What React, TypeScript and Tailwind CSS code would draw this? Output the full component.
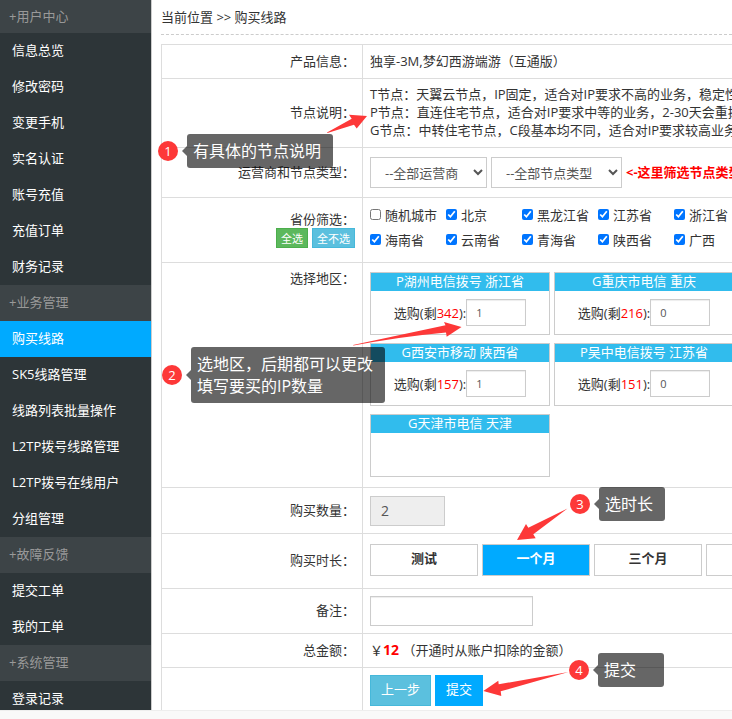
import type { ReactNode } from "react";

const menu = [
  { title: "用户中心", items: ["信息总览", "修改密码", "变更手机", "实名认证", "账号充值", "充值订单", "财务记录"] },
  { title: "业务管理", items: ["购买线路", "SK5线路管理", "线路列表批量操作", "L2TP拨号线路管理", "L2TP拨号在线用户", "分组管理"] },
  { title: "故障反馈", items: ["提交工单", "我的工单"] },
  { title: "系统管理", items: ["登录记录"] },
];

const activeItem = "购买线路";

const provinces = [
  { name: "随机城市", checked: false },
  { name: "北京", checked: true },
  { name: "黑龙江省", checked: true },
  { name: "江苏省", checked: true },
  { name: "浙江省", checked: true },
  { name: "海南省", checked: true },
  { name: "云南省", checked: true },
  { name: "青海省", checked: true },
  { name: "陕西省", checked: true },
  { name: "广西", checked: true },
];

const areas = [
  { name: "P湖州电信拨号 浙江省", left: 342, count: 1 },
  { name: "G重庆市电信 重庆", left: 216, count: 0 },
  { name: "G西安市移动 陕西省", left: 157, count: 1 },
  { name: "P吴中电信拨号 江苏省", left: 151, count: 0 },
  { name: "G天津市电信 天津" },
];

const durations = ["测试", "一个月", "三个月", "六个月"];

const Sidebar = () => (
  <nav className="w-[152px] shrink-0 overflow-hidden border-r border-[#ccc] bg-[#2d3538]">
    {menu.map((group, gi) => (
      <div key={group.title}>
        <h2 className={`flex items-center bg-[#3d4447] pb-0.5 pl-[9px] text-[#999] ${gi === 0 ? "h-[33px]" : "h-9"}`}>
          +{group.title}
        </h2>
        <ul>
          {group.items.map((item) => (
            <li key={item}>
              <a
                href="#"
                className={`flex h-9 items-center pb-0.5 pl-3 text-white ${item === activeItem ? "bg-[#00aaff]" : ""}`}
              >
                {item}
              </a>
            </li>
          ))}
        </ul>
      </div>
    ))}
  </nav>
);

type RowProps = { label?: ReactNode; height: string; top?: boolean; children: ReactNode };

const Row = ({ label, height, top, children }: RowProps) => (
  <tr className={height}>
    <th
      scope="row"
      className={`w-[201px] border border-[#ddd] pr-[7px] pl-2 text-right font-normal ${top ? "pt-1.5 align-top" : "pb-0.5 align-middle"}`}
    >
      {label}
    </th>
    <td className={`border border-[#ddd] px-[7px] ${top ? "pt-[9px] align-top" : "pb-0.5 align-middle"}`}>{children}</td>
  </tr>
);

const AreaCard = ({ area }: { area: (typeof areas)[number] }) => (
  <div className="h-[63px] w-[180px] border border-[#ccc]">
    <div className="h-[18px] bg-[#31bced] text-center leading-4 text-white">{area.name}</div>
    {area.left !== undefined && (
      <label className="flex h-[43px] items-center justify-center">
        <span>
          选购(剩<span className="text-[#f00]">{area.left}</span>):
        </span>
        <input
          type="text"
          defaultValue={area.count}
          className="h-[27px] w-[60px] border border-[#ccc] px-[9px] text-[11px] text-[#555] shadow-[inset_0_1px_1px_rgba(0,0,0,0.075)]"
        />
      </label>
    )}
  </div>
);

type MarkerProps = { step: number; place: string; width: string; children: ReactNode };

const Marker = ({ step, place, width, children }: MarkerProps) => (
  <div className={`pointer-events-none absolute flex items-center text-white ${place}`}>
    <span className="flex h-5 w-5 items-center justify-center rounded-full bg-[#fd3838] text-[13px]">{step}</span>
    <span className="ml-1 h-0 w-0 border-y-[5px] border-r-[5px] border-y-transparent border-r-black/60" />
    <span className={`rounded-[3px] bg-black/60 px-1.5 py-1.5 text-base leading-[22px] whitespace-pre ${width}`}>
      {children}
    </span>
  </div>
);

const Arrows = () => (
  <svg className="pointer-events-none absolute top-0 left-0" width="732" height="719" fill="#fd3838" aria-hidden="true">
    <path d="M327 132.5 L351.7 118.7 L349 114.7 L367 116 L356.7 128.5 L354 124.7 L327.5 133Z" />
    <path d="M353 345 L445.5 325.3 L444 322 L461.5 327 L446.7 336.7 L446 332.5 Q398 337 353.5 345.6Z" />
    <path d="M567.5 508.5 L528.3 527.7 L526 524 L517 540 L535.7 538.3 L533.3 534.3Z" />
    <path d="M568.5 672 L498.7 684.3 L498.3 680.7 L483.3 691 L501.3 696 L500.7 691.3Z" />
  </svg>
);

const selectClass = "h-[31px] border border-[#ccc] bg-white px-[10px] text-[#555]";

const OrderForm = () => (
  <table className="w-full min-w-[760px] table-fixed border-collapse">
    <tbody>
      <Row label="产品信息：" height="h-[34px]">独享-3M,梦幻西游端游（互通版）</Row>
      <Row label="节点说明：" height="h-[69px]">
        <div className="whitespace-nowrap">
          <p>T节点：天翼云节点，IP固定，适合对IP要求不高的业务，稳定性高</p>
          <p>P节点：直连住宅节点，适合对IP要求中等的业务，2-30天会重拨</p>
          <p>G节点：中转住宅节点，C段基本均不同，适合对IP要求较高业务，</p>
        </div>
      </Row>
      <Row label="运营商和节点类型：" height="h-[50px]">
        <div className="flex items-center gap-1 pt-0.5 whitespace-nowrap">
          <select aria-label="运营商" className={`w-[117px] ${selectClass}`}>
            <option>--全部运营商</option>
          </select>
          <select aria-label="节点类型" className={`w-[131px] ${selectClass}`}>
            <option>--全部节点类型</option>
          </select>
          <b className="pb-0.5 text-[#f00]">&lt;-这里筛选节点类型</b>
        </div>
      </Row>
      <Row
        height="h-[65px]"
        label={
          <>
            省份筛选：
            <div className="flex justify-end gap-1">
              <button type="button" className="h-5 border border-[#4cae4c] bg-[#5cb85c] px-1 text-[11px] leading-[17px] text-white">
                全选
              </button>
              <button type="button" className="h-5 border border-[#46b8da] bg-[#5bc0de] px-1 text-[11px] leading-[17px] text-white">
                全不选
              </button>
            </div>
          </>
        }
      >
        <div className="grid grid-cols-[repeat(5,76px)] pb-1">
          {provinces.map((p) => (
            <label key={p.name} className="flex h-[25px] items-center gap-1 whitespace-nowrap">
              <input type="checkbox" defaultChecked={p.checked} className="h-[11px] w-[11px]" />
              {p.name}
            </label>
          ))}
        </div>
      </Row>
      <Row label="选择地区：" height="h-[225px]" top>
        <div className="grid grid-cols-[repeat(2,180px)] gap-x-1 gap-y-2">
          {areas.map((area) => (
            <AreaCard key={area.name} area={area} />
          ))}
        </div>
      </Row>
      <Row label={<label htmlFor="amount">购买数量：</label>} height="h-[46px]">
        <input
          id="amount"
          readOnly
          defaultValue="2"
          className="mt-0.5 block h-[30px] w-[75px] border border-[#ccc] bg-[#eee] px-[10px] text-sm text-[#555]"
        />
      </Row>
      <Row label="购买时长：" height="h-[55px]">
        <div className="flex gap-1">
          {durations.map((d) => (
            <button
              key={d}
              type="button"
              className={`h-8 w-[108px] shrink-0 border border-[#ccc] pb-1 font-bold ${d === "一个月" ? "bg-[#00aaff] text-white" : "bg-white"}`}
            >
              {d}
            </button>
          ))}
        </div>
      </Row>
      <Row label={<label htmlFor="remark">备注：</label>} height="h-[45px]">
        <input
          id="remark"
          type="text"
          className="mt-0.5 block h-[30px] w-[163px] border border-[#ccc] px-[10px] shadow-[inset_0_1px_1px_rgba(0,0,0,0.075)]"
        />
      </Row>
      <Row label="总金额：" height="h-[34px]">
        ￥<b className="text-sm leading-[18px] text-[#f00]">12</b> （开通时从账户扣除的金额）
      </Row>
      <Row height="h-[46px]">
        <div className="flex gap-1 pt-0.5">
          <button type="button" className="h-[31px] border border-[#46b8da] bg-[#5bc0de] px-[10px] pb-1 text-white">
            上一步
          </button>
          <button type="submit" className="h-[31px] bg-[#00aaff] px-[11px] pb-1 text-white">
            提交
          </button>
        </div>
      </Row>
    </tbody>
  </table>
);

export default function App() {
  return (
    <div className="relative flex h-screen flex-col overflow-hidden bg-white font-['Open_Sans','Noto_Sans_CJK_SC',sans-serif] text-[13px] leading-[18px] text-[#333]">
      <div className="flex min-h-0 flex-1">
        <Sidebar />
        <main className="min-w-0 flex-1 overflow-hidden pl-[9px]">
          <div className="mb-[9px] h-[35px] border-b border-dashed border-[#ccc] pt-2">当前位置 &gt;&gt; 购买线路</div>
          <form onSubmit={(e) => e.preventDefault()}>
            <OrderForm />
          </form>
        </main>
      </div>
      <footer className="h-[9px] shrink-0 border-t border-[#eee] bg-[#f9f9f9]" />

      <Marker step={1} place="top-[134px] left-[158px]" width="w-[146px]">有具体的节点说明</Marker>
      <Marker step={2} place="top-[347px] left-[162px]" width="w-[194px]">{"选地区，后期都可以更改\n填写要买的IP数量"}</Marker>
      <Marker step={3} place="top-[487px] left-[570px]" width="w-[66px]">选时长</Marker>
      <Marker step={4} place="top-[653px] left-[569px]" width="w-[66px]">提交</Marker>
      <Arrows />
    </div>
  );
}
